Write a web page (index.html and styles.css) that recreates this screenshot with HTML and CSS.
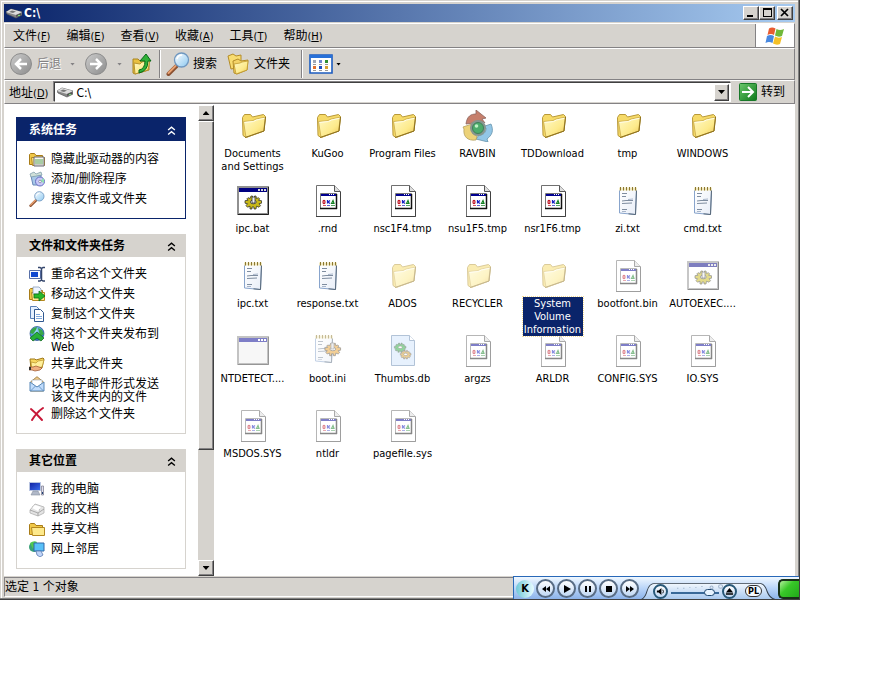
FILE: index.html
```html
<!DOCTYPE html>
<html lang="zh-CN">
<head>
<meta charset="utf-8">
<title>C:\</title>
<link rel="stylesheet" href="styles.css">
</head>
<body>
<svg class="defs" aria-hidden="true">
  <defs>
    <linearGradient id="g-folder" x1="0" y1="0" x2="1" y2="1"><stop offset="0" stop-color="#fffac8"/><stop offset=".6" stop-color="#fdea8c"/><stop offset="1" stop-color="#ecc450"/></linearGradient>
    <linearGradient id="g-lens" x1="0" y1="0" x2="1" y2="1"><stop offset="0" stop-color="#fff"/><stop offset="1" stop-color="#8cc8f0"/></linearGradient>
    <linearGradient id="g-green" x1="0" y1="0" x2="1" y2="1"><stop offset="0" stop-color="#6cc86c"/><stop offset="1" stop-color="#0c7818"/></linearGradient>
    <linearGradient id="g-gray" x1="0" y1="0" x2="1" y2="1"><stop offset="0" stop-color="#ccc"/><stop offset="1" stop-color="#8c8c8c"/></linearGradient>
    <linearGradient id="g-screen" x1="0" y1="0" x2="1" y2="1"><stop offset="0" stop-color="#1020a0"/><stop offset="1" stop-color="#3c70f0"/></linearGradient>
    <linearGradient id="g-page" x1="0" y1="0" x2="1" y2="1"><stop offset="0" stop-color="#fff"/><stop offset="1" stop-color="#e8eef8"/></linearGradient>
    <radialGradient id="g-globe" cx=".4" cy=".3" r=".8"><stop offset="0" stop-color="#a0e0ff"/><stop offset="1" stop-color="#1058b0"/></radialGradient>
    <linearGradient id="g-tray" x1="0" y1="0" x2="0" y2="1"><stop offset="0" stop-color="#f2f8fe"/><stop offset="1" stop-color="#a8c8ee"/></linearGradient>
  </defs>
  <symbol id="folder" viewBox="0 0 32 32">
    <path d="M5.500 7.500 7.500 4.500h6l2 2.500 11-2.500 2 2-1.500 14.500-18 6.500-3-2z" fill="#f6da68" stroke="#b89838"/>
    <path d="M6.500 11.500 16 10.500l3-1.500 9.500-2L26.500 21 9 27.500z" fill="url(#g-folder)" stroke="#c8a848" stroke-width=".8"/>
    <path d="M7.500 12.500 16.500 11.500l3-1.500 8-1.700" fill="none" stroke="#fffce8"/>
    <path d="M8 27.500 27 21l1.500-14" fill="none" stroke="#8c7020"/>
  </symbol>
  <symbol id="gear" viewBox="0 0 20 16">
    <path d="M8 1h1.500v2h2V1H13l.5 2.500 2-.8 1.200 1.200-1.200 1.400 3 .4v2.500l-2.500.5 1.500 2-1.500 1.500-2.500-1-.5 2.800h-2v-2h-2v2h-2L7 11.200l-2.500 1L3 10.700l1.500-2L2 8.200V5.700l3-.4-1.200-1.400L5 2.700l2 .8z" fill="currentColor" stroke="#222" stroke-width=".7"/>
    <ellipse cx="10.300" cy="7" rx="3" ry="1.800" fill="#fff" stroke="#222" stroke-width=".7"/>
  </symbol>
  <symbol id="bat" viewBox="0 0 32 32">
    <path d="M1 2h30v27H1z" fill="#fff" stroke="#909090" stroke-width="2"/>
    <path d="M1 29.500h30.500V2" fill="none" stroke="#202020"/>
    <path d="M2 3h28v4H2z" fill="#000080"/>
    <path d="M21 4h2v2h-2zM24 4h2v2h-2zM27 4h2v2h-2z" fill="#d8d8d8"/>
    <g color="#c8b818"><use href="#gear" x="6" y="10" width="20" height="16"/></g>
    <path d="M15 12h3v6h-3z" fill="#eee" stroke="#333" stroke-width=".8"/>
  </symbol>
  <symbol id="com" viewBox="0 0 32 32">
    <path d="M1 2h30v27H1z" fill="#f0f0f0" stroke="#888" stroke-width="2"/>
    <path d="M1 29.500h30.500V2" fill="none" stroke="#303030"/>
    <path d="M2 3h28v4H2z" fill="#000090"/>
    <path d="M21 4h2v2h-2zM24 4h2v2h-2zM27 4h2v2h-2z" fill="#fff"/>
  </symbol>
  <symbol id="page" viewBox="0 0 32 32">
    <path d="M4.500.5h18l6 6v25h-24z" fill="#fff" stroke="#707070"/>
    <path d="M28.500 7v24.500H4" fill="none" stroke="#404040"/>
    <path d="M22.500.5v6h6" fill="#ddd" stroke="#555"/>
    <path d="M8.500 8.500h16v15h-16z" fill="#fff" stroke="#777"/>
    <path d="M24.500 9v15M8 23.500h17" fill="none" stroke="#111" stroke-width="1.500"/>
    <path d="M9 9h15v2H9z" fill="#000090"/><path d="M17 9h1v1h-1zM19 9h1v1h-1zM21 9h1v1h-1z" fill="#fff"/>
    <ellipse cx="12" cy="17" rx="1" ry="1.600" fill="none" stroke="#c01020" stroke-width="1.200"/>
    <path d="M15.500 15v3.500M18 15.500 16 17l2 1.500" fill="none" stroke="#1820c0" stroke-width="1.200"/>
    <path d="m19.500 18.500 1.500-3 1 3z" fill="none" stroke="#108020" stroke-width="1.200"/>
    <path d="M11 20.500h3" stroke="#c01020" stroke-width=".7"/><path d="M15 20.500h3" stroke="#1820c0" stroke-width=".7"/><path d="M19 20.500h4" stroke="#108020" stroke-width=".7"/>
  </symbol>
  <symbol id="txt" viewBox="0 0 32 32">
    <path d="M7.500 4.500h17l-1 25-16-1.500z" fill="url(#g-page)" stroke="#88a4cc"/>
    <path d="m24.500 5-1 24.500-7-.7" fill="none" stroke="#586878"/>
    <path d="M7 2.500h18v3H7z" fill="#f0e8c0"/>
    <path d="M8.500 2v3.500M11.500 2v3.500M14.500 2v3.500M17.500 2v3.500M20.500 2v3.500M23.500 2v3.500" stroke="#8c7830"/>
    <path d="M10 8.500h5M10 11.500h4M10 16l4-.5h7M10 18.500l10-.5M10 24.500h5" stroke="#708094" fill="none" stroke-width=".9"/>
    <path d="M16 14.500l5-.5M10 26.500h4" stroke="#94a4bc" stroke-width=".8"/>
  </symbol>
  <symbol id="ini" viewBox="0 0 32 32">
    <use href="#txt" x="-4" y="-2" width="32" height="32"/>
    <g color="#e8a030"><use href="#gear" x="11" y="7" width="19" height="16"/></g>
    <path d="M19 8h3v6h-3z" fill="#ddd" stroke="#666" stroke-width=".7"/>
  </symbol>
  <symbol id="thumbs" viewBox="0 0 32 32">
    <path d="M4.500.5h18l5 5v25h-23z" fill="#d0e4fc" stroke="#6888b0"/><path d="M22.500.5v5h5" fill="#fff" stroke="#6888b0"/>
    <g color="#28b040"><use href="#gear" x="6" y="7" width="14" height="12"/></g>
    <g color="#d8a030"><use href="#gear" x="12" y="14" width="13" height="12"/></g>
  </symbol>
  <symbol id="rav" viewBox="0 0 32 32">
    <path d="M4 14C5 6 9 4 14 4V0l10 8-4 1 3 4c-4-3-8-3-11 0z" fill="#b86048" stroke="#704038" stroke-width=".8"/>
    <path d="M29 14c3 7 1 11-4 15l1 3-12-3 3-4c5 0 7-3 7-7l-4-1z" fill="#78b8e0" stroke="#407898" stroke-width=".8"/>
    <path d="M14 30C6 31 1 27 2 19l-1-2 9-3 1 10 4 2z" fill="#e8c858" stroke="#a08838" stroke-width=".8"/>
    <circle cx="16" cy="18" r="8" fill="#687c74"/>
    <circle cx="16" cy="18" r="5.500" fill="#209848" stroke="#106030"/><circle cx="14.500" cy="16" r="1.800" fill="#b0f0b8"/>
  </symbol>
  <symbol id="drive" viewBox="0 0 16 16">
    <path d="m0 7 5-3 11 3v3l-6 3L1 9z" fill="#888" stroke="#555" stroke-width=".7"/>
    <path d="m0 7 5-3 11 3-6 3z" fill="#ddd"/><path d="m3 7 3-1.500 4 1L7 8z" fill="#777"/><path d="m10 10 5-2v2l-5 2z" fill="#555"/><path d="M12 10h2v1h-2z" fill="#7d7"/>
  </symbol>
  <symbol id="search" viewBox="0 0 24 24">
    <path d="m2.500 22 8-8" stroke="#8a5030" stroke-width="4" stroke-linecap="round"/><path d="m2.500 21 7-7" stroke="#e8a070" stroke-width="2" stroke-linecap="round"/>
    <circle cx="15.500" cy="8" r="7" fill="url(#g-lens)" stroke="#7098c0" stroke-width="1.300"/><path d="M11 7q1-4 5-4" stroke="#fff" stroke-width="1.500" fill="none"/>
  </symbol>
  <symbol id="mfolder" viewBox="0 0 16 16">
    <path d="M.5 13.500v-10l1-1h4l1.500 2h6.500v9z" fill="#f0c848" stroke="#a87c18"/>
    <path d="M2.500 6.500h13v8h-12z" fill="#fde98c" stroke="#b48820"/>
  </symbol>
  <symbol id="hide" viewBox="0 0 16 16"><use href="#mfolder"/><path d="M5 6h10v9H5z" fill="#f8f8f0" stroke="#667"/><path d="M7 8v5M9 8v5M11 8v5M13 8v5" stroke="#58a058"/><path d="M6 14h8" stroke="#999"/></symbol>
  <symbol id="addrem" viewBox="0 0 16 16"><path d="m2 5 10-1v10H4z" fill="#a8c8e8" stroke="#6888b8"/><path d="m1 3 4-2 2 2 5-2 1 3-11 2z" fill="#d0e0d8" stroke="#7898a8" stroke-width=".7"/><circle cx="11" cy="10.500" r="4.500" fill="#c8c8f8" stroke="#6870c0"/><path d="m11 10 4-3v5z" fill="#90e0b0"/><circle cx="11" cy="10.500" r="1.300" fill="#fff" stroke="#668" stroke-width=".6"/></symbol>
  <symbol id="rename" viewBox="0 0 16 16"><path d="M.5 4.500h11v8H.5z" fill="#f8faff" stroke="#5870a8"/><path d="M2 6h7v5H2z" fill="#1048d0"/><path d="M9 1.500h2l1.500 1 1.500-1h2M9 15h2l1.500-1 1.500 1h2M12.500 2v12" stroke="#34466c" fill="none" stroke-width="1.500"/></symbol>
  <symbol id="move" viewBox="0 0 16 16"><use href="#mfolder"/><path d="M4 1h6l2 2v5H4z" fill="#eef4ff" stroke="#7890b0" stroke-width=".7"/><path d="M5 8h5V5l6 5-6 5v-3H5z" fill="#28b828" stroke="#087018" stroke-width=".8"/></symbol>
  <symbol id="copy" viewBox="0 0 16 16"><path d="M1.500.5h6l3 3v9h-9z" fill="#e4f0ff" stroke="#5880b8"/><path d="M5.500 3.500h6l3 3v9h-9z" fill="#fff" stroke="#305890"/><path d="M7 8.500h4M7 10.500h6M7 12.500h6" stroke="#80a8dc"/></symbol>
  <symbol id="globe" viewBox="0 0 16 16"><circle cx="8" cy="7.500" r="7" fill="url(#g-globe)" stroke="#285090" stroke-width=".7"/><path d="M2 4q3-3 6-3L7 4 4 8 1 7zM9 2l4 2 2 4-3 2-2-4z" fill="#38a848"/><path d="m8 6 7 6-3 3-4-3-4 3-3-3z" fill="#28b038" stroke="#086018" stroke-width=".7"/></symbol>
  <symbol id="share" viewBox="0 0 16 16"><path d="M1 3h5l1 1 7-2 1 1-2 9-11 1z" fill="#f8d860" stroke="#a07818"/><path d="m2 6 5 1 2-2 6-1-2 7-10 2z" fill="#fff09c" stroke="#b89028" stroke-width=".7"/><path d="M0 11h4l3-1 6 2-2 2-5 1-3-1H0z" fill="#f0b080" stroke="#985028" stroke-width=".7"/><path d="M0 11h2v3H0z" fill="#333"/></symbol>
  <symbol id="mail" viewBox="0 0 16 16"><path d="M1.500 6 8 .7 14.500 6v9h-13z" fill="#f0c888" stroke="#a88848"/><path d="M3 4h10v7H3z" fill="#fff" stroke="#9ab" stroke-width=".6"/><path d="m1 6 7 5 7-5v9H1z" fill="#c0dcfc" stroke="#5888b8"/><path d="m1.500 15 5-5M14.500 15l-5-5" stroke="#5888b8" stroke-width=".8"/></symbol>
  <symbol id="delete" viewBox="0 0 16 16"><path d="M2 3q5 4 11 11M14 2Q8 6 3 14" fill="none" stroke="#c81838" stroke-width="2" stroke-linecap="round"/></symbol>
  <symbol id="pc" viewBox="0 0 16 16"><path d="M.5 1.500h11v8H.5z" fill="url(#g-screen)" stroke="#b8c4e0"/><path d="M4 10h5l2 4H2z" fill="#b0b8c8" stroke="#8890a0" stroke-width=".6"/><path d="M12.500 5h2v9h-2z" fill="#dde" stroke="#778" stroke-width=".7"/><path d="M13 11h1v2h-1z" fill="#247"/></symbol>
  <symbol id="docs" viewBox="0 0 16 16"><path d="m1 9 5-6 9 3v6l-6 3-8-3z" fill="#e4e4e4" stroke="#b0b0b0" stroke-width=".8"/><path d="m1 9 8 3 6-4M3 6l8 3M9 12v3" fill="none" stroke="#989898" stroke-width=".8"/><path d="m3 7 3-3 6 2-3 4z" fill="#fff"/></symbol>
  <symbol id="net" viewBox="0 0 16 16"><circle cx="5" cy="6" r="5" fill="#38a078"/><path d="M1 2q4-3 7-1L4 8z" fill="#50c850"/><path d="M5 2h10v8H5z" fill="#58c0f8" stroke="#3068a8"/><path d="M7 10h5l2 4-3 2-3-2z" fill="#c0d4f8" stroke="#5878b0" stroke-width=".8"/></symbol>
  <symbol id="up2" viewBox="0 0 8 8"><path d="M1 3.500 4 1l3 2.500M1 7.500 4 5l3 2.500" fill="none" stroke="currentColor" stroke-width="1.200"/></symbol>
</svg>

<main class="window">
  <header class="titlebar">
    <svg class="i16"><use href="#drive"/></svg>
    <h1>C:\</h1>
    <div class="winbtns">
      <button aria-label="最小化"><svg viewBox="0 0 12 10"><path d="M2 7h6v2H2z"/></svg></button>
      <button aria-label="最大化"><svg viewBox="0 0 12 10"><path d="M2 0h9v9H2zM3 2v6h7V2z" fill-rule="evenodd"/></svg></button>
      <button class="close" aria-label="关闭"><svg viewBox="0 0 12 10"><path d="m2 1 7 7M9 1 2 8" stroke="#000" stroke-width="1.700"/></svg></button>
    </div>
  </header>

  <nav class="menubar">
    <button>文件<span>(<u>F</u>)</span></button>
    <button>编辑<span>(<u>E</u>)</span></button>
    <button>查看<span>(<u>V</u>)</span></button>
    <button>收藏<span>(<u>A</u>)</span></button>
    <button>工具<span>(<u>T</u>)</span></button>
    <button>帮助<span>(<u>H</u>)</span></button>
    <div class="flag">
      <svg viewBox="0 0 20 18"><path d="M4 1.500Q7-.5 10.500 1.500L9 8Q6 6 2.500 8z" fill="#e85c30"/><path d="M11.500 2q3.500 2 7.500 0l-2 7q-3.500 1.500-7-.5z" fill="#70b838"/><path d="M2 9q3.500-2 7 0L7.500 16Q4 14 .5 16z" fill="#4888e0"/><path d="M10 9.500q3 2 7 .5l-2 7q-3.500 1.500-7-.5z" fill="#f4c028"/></svg>
    </div>
  </nav>

  <div class="toolbar">
    <button class="nav back" disabled><svg class="i24" viewBox="0 0 24 24"><circle cx="12" cy="12" r="10.500" fill="url(#g-gray)" stroke="#8c8c8c"/><path d="M18 12H7m5-5-5 5 5 5" fill="none" stroke="#fff" stroke-width="2.500"/></svg>后退</button>
    <span class="drop off"></span>
    <button class="nav fwd" disabled aria-label="前进"><svg class="i24" viewBox="0 0 24 24"><circle cx="12" cy="12" r="10.500" fill="url(#g-gray)" stroke="#8c8c8c"/><path d="M6 12h11m-5-5 5 5-5 5" fill="none" stroke="#fff" stroke-width="2.500"/></svg></button>
    <span class="drop off"></span>
    <button class="updir" aria-label="向上"><svg class="i24" viewBox="0 0 24 24"><path d="M2 7h5l2 2 9-2v11L4 22l-2-1z" fill="#e8c040" stroke="#a88420"/><path d="m3 11 6 1 2-2 8-2-2 10-13 4z" fill="url(#g-folder)" stroke="#b89430"/><path d="M8 18q6-1 6-9H9l6-7 5 7h-3q0 10-9 12z" fill="#30b038" stroke="#086818"/></svg></button>
    <span class="sep"></span>
    <button class="find"><svg class="i24"><use href="#search"/></svg>搜索</button>
    <button class="folders"><svg class="i24" viewBox="0 0 24 24"><path d="M1 4l5-2 3 2 5-1v12L4 17z" fill="#f8dc70" stroke="#b48c28"/><path d="M6 9l5-2 3 2 7-1-1 10-10 4-3-1z" fill="#f4d468" stroke="#b48c28"/><path d="m7 12 6-1 2-1 6-1-1 9-11 4z" fill="url(#g-folder)" stroke="#c09a30" stroke-width=".8"/></svg>文件夹</button>
    <span class="sep"></span>
    <button class="views" aria-label="查看"><svg class="i24" viewBox="0 0 24 24"><path d="M1 3h22v18H1z" fill="#fff" stroke="#1c5cc0" stroke-width="1.600"/><path d="M1 3h22v3H1z" fill="#2870d8"/><path d="M4 8h3v3H4z" fill="#a0a8b8"/><path d="M10 8h3v3h-3z" fill="#7088d0"/><path d="M16 8h3v3h-3z" fill="#309030"/><path d="M4 14h3v3H4z" fill="#e07030"/><path d="M10 14h3v3h-3z" fill="#2050c0"/><path d="M16 14h3v3h-3z" fill="#d8a030"/><path d="M4 12.500h3m3 0h3m3 0h3M4 18.500h3m3 0h3m3 0h3" stroke="#999"/></svg></button>
    <span class="drop"></span>
  </div>

  <form class="address">
    <label for="path">地址<span>(<u>D</u>)</span></label>
    <div class="field">
      <svg class="i16"><use href="#drive"/></svg>
      <input id="path" type="text" value="C:\">
      <button type="button" class="bevel" aria-label="展开"><i class="tri down"></i></button>
    </div>
    <button type="button" class="go"><svg viewBox="0 0 18 18"><rect x=".5" y=".5" width="17" height="17" rx="1" fill="url(#g-green)" stroke="#187828"/><path d="M3 9h11M9 4l5 5-5 5" fill="none" stroke="#fff" stroke-width="2"/></svg>转到</button>
  </form>

  <div class="content">
    <aside class="side">
      <section class="card main">
        <h2>系统任务<svg><use href="#up2"/></svg></h2>
        <ul>
          <li><svg class="i16"><use href="#hide"/></svg><a href="#">隐藏此驱动器的内容</a></li>
          <li><svg class="i16"><use href="#addrem"/></svg><a href="#">添加/删除程序</a></li>
          <li><svg class="i16"><use href="#search"/></svg><a href="#">搜索文件或文件夹</a></li>
        </ul>
      </section>
      <section class="card">
        <h2>文件和文件夹任务<svg><use href="#up2"/></svg></h2>
        <ul>
          <li><svg class="i16"><use href="#rename"/></svg><a href="#">重命名这个文件夹</a></li>
          <li><svg class="i16"><use href="#move"/></svg><a href="#">移动这个文件夹</a></li>
          <li><svg class="i16"><use href="#copy"/></svg><a href="#">复制这个文件夹</a></li>
          <li><svg class="i16"><use href="#globe"/></svg><a href="#">将这个文件夹发布到 Web</a></li>
          <li><svg class="i16"><use href="#share"/></svg><a href="#">共享此文件夹</a></li>
          <li><svg class="i16"><use href="#mail"/></svg><a href="#">以电子邮件形式发送该文件夹内的文件</a></li>
          <li><svg class="i16"><use href="#delete"/></svg><a href="#">删除这个文件夹</a></li>
        </ul>
      </section>
      <section class="card">
        <h2>其它位置<svg><use href="#up2"/></svg></h2>
        <ul>
          <li><svg class="i16"><use href="#pc"/></svg><a href="#">我的电脑</a></li>
          <li><svg class="i16"><use href="#docs"/></svg><a href="#">我的文档</a></li>
          <li><svg class="i16"><use href="#mfolder"/></svg><a href="#">共享文档</a></li>
          <li><svg class="i16"><use href="#net"/></svg><a href="#">网上邻居</a></li>
        </ul>
      </section>
    </aside>
    <div class="scroll">
      <button class="bevel" aria-label="向上滚动"><i class="tri up"></i></button>
      <div class="track"><div class="thumb bevel"></div></div>
      <button class="bevel" aria-label="向下滚动"><i class="tri down"></i></button>
    </div>
    <ul class="files">
      <li><svg><use href="#folder"/></svg><a href="#">Documents and Settings</a></li>
      <li><svg><use href="#folder"/></svg><a href="#">KuGoo</a></li>
      <li><svg><use href="#folder"/></svg><a href="#">Program Files</a></li>
      <li><svg class="soft"><use href="#rav"/></svg><a href="#">RAVBIN</a></li>
      <li><svg><use href="#folder"/></svg><a href="#">TDDownload</a></li>
      <li><svg><use href="#folder"/></svg><a href="#">tmp</a></li>
      <li><svg><use href="#folder"/></svg><a href="#">WINDOWS</a></li>
      <li><svg><use href="#bat"/></svg><a href="#">ipc.bat</a></li>
      <li><svg><use href="#page"/></svg><a href="#">.rnd</a></li>
      <li><svg><use href="#page"/></svg><a href="#">nsc1F4.tmp</a></li>
      <li><svg><use href="#page"/></svg><a href="#">nsu1F5.tmp</a></li>
      <li><svg><use href="#page"/></svg><a href="#">nsr1F6.tmp</a></li>
      <li><svg><use href="#txt"/></svg><a href="#">zi.txt</a></li>
      <li><svg><use href="#txt"/></svg><a href="#">cmd.txt</a></li>
      <li><svg><use href="#txt"/></svg><a href="#">ipc.txt</a></li>
      <li><svg><use href="#txt"/></svg><a href="#">response.txt</a></li>
      <li class="hid"><svg><use href="#folder"/></svg><a href="#">ADOS</a></li>
      <li class="hid"><svg><use href="#folder"/></svg><a href="#">RECYCLER</a></li>
      <li class="hid sel"><svg><use href="#folder"/></svg><a href="#">System Volume Information</a></li>
      <li class="hid"><svg><use href="#page"/></svg><a href="#">bootfont.bin</a></li>
      <li class="hid"><svg><use href="#bat"/></svg><a href="#">AUTOEXEC....</a></li>
      <li class="hid"><svg><use href="#com"/></svg><a href="#">NTDETECT....</a></li>
      <li class="hid"><svg><use href="#ini"/></svg><a href="#">boot.ini</a></li>
      <li class="hid"><svg><use href="#thumbs"/></svg><a href="#">Thumbs.db</a></li>
      <li class="hid"><svg><use href="#page"/></svg><a href="#">argzs</a></li>
      <li class="hid"><svg><use href="#page"/></svg><a href="#">ARLDR</a></li>
      <li class="hid"><svg><use href="#page"/></svg><a href="#">CONFIG.SYS</a></li>
      <li class="hid"><svg><use href="#page"/></svg><a href="#">IO.SYS</a></li>
      <li class="hid"><svg><use href="#page"/></svg><a href="#">MSDOS.SYS</a></li>
      <li class="hid"><svg><use href="#page"/></svg><a href="#">ntldr</a></li>
      <li class="hid"><svg><use href="#page"/></svg><a href="#">pagefile.sys</a></li>
    </ul>
  </div>

  <footer class="status">选定 1 个对象</footer>

  <div class="player">
    <button class="logo">K</button>
    <button class="round" aria-label="上一首"><svg viewBox="0 0 10 10"><path d="M5 2v6L1 5zM9 2v6L5 5z"/></svg></button>
    <button class="round" aria-label="播放"><svg viewBox="0 0 10 10"><path d="m2 1 7 4-7 4z"/></svg></button>
    <button class="round" aria-label="暂停"><svg viewBox="0 0 10 10"><path d="M2 2h2v6H2zM6 2h2v6H6z"/></svg></button>
    <button class="round" aria-label="停止"><svg viewBox="0 0 10 10"><path d="M2 2h6v6H2z"/></svg></button>
    <button class="round" aria-label="下一首"><svg viewBox="0 0 10 10"><path d="m1 2 4 3-4 3zM5 2l4 3-4 3z"/></svg></button>
    <div class="tray">
      <svg class="traybg" viewBox="0 0 134 20" preserveAspectRatio="none"><path d="M0 19.500Q4 18 6 10 8 1.500 14 1.500H118Q123 2 125 10 128 19 134 19.500z" fill="url(#g-tray)" stroke="#34404c"/><path d="M36 7h1m5 0h1m5-1h1m5 0h1m5-1h1" stroke="#90a8c0"/><circle cx="70" cy="6" r="1.500" fill="none" stroke="#a0b4cc"/><circle cx="79" cy="5" r="2" fill="none" stroke="#a0b4cc"/></svg>
      <button class="round small" aria-label="静音"><svg viewBox="0 0 10 10"><path d="M1 4h2l3-3v8L3 6H1z"/><path d="M7.500 3q1.500 2 0 4" fill="none" stroke="#000"/></svg></button>
      <input type="range" min="0" max="100" value="88" aria-label="音量">
      <button class="round small" aria-label="弹出"><svg viewBox="0 0 10 10"><path d="m5 1 4 5H1zM1 7h8v1.500H1z"/></svg></button>
      <button class="pl">PL</button>
    </div>
    <div class="lcd"></div>
  </div>
</main>
</body>
</html>
```
FILE: styles.css
```css
* { box-sizing: border-box; }
body {
  margin: 0;
  min-height: 100vh;
  padding: 0 84px 77px 0;
  display: flex;
  background: #fff;
  color: #000;
  font: 11px/13px "DejaVu Sans Condensed", "Noto Sans CJK SC", sans-serif;
}
.defs { position: absolute; width: 0; height: 0; }
button, input { font: inherit; color: inherit; margin: 0; padding: 0; border: 0; background: none; }
button { display: flex; align-items: center; flex: none; }
ul { list-style: none; margin: 0; padding: 0; }
a { color: inherit; text-decoration: none; }
h1, h2 { margin: 0; font-size: 12px; }
svg { display: block; flex: none; }
.i16 { width: 16px; height: 16px; }
.i24 { width: 24px; height: 24px; }

.window {
  position: relative;
  flex: 1;
  min-width: 0;
  display: flex;
  flex-direction: column;
  padding: 4px 4px 2px;
  background: #d6d3ce;
  border-right: 1px solid #404040;
  border-bottom: 1px solid #404040;
  box-shadow: inset -1px -1px #808080, inset 1px 1px #d6d3ce, inset 2px 2px #fff;
  overflow: hidden;
}

.titlebar {
  display: flex;
  align-items: center;
  gap: 2px;
  height: 18px;
  padding: 0 2px;
  background: linear-gradient(90deg, #0a246a, #a6caf0);
  color: #fff;
}
.titlebar h1 { flex: 1; line-height: 18px; }
.winbtns { display: flex; }
.winbtns button {
  width: 16px;
  height: 14px;
  justify-content: center;
}
.winbtns svg { width: 12px; height: 10px; }
.winbtns .close { margin-left: 2px; }
.winbtns button, .bevel {
  background: #d6d3ce;
  border: 1px solid;
  border-color: #fff #404040 #404040 #fff;
  box-shadow: inset -1px -1px #848284;
}

.menubar, .toolbar, .address {
  display: flex;
  align-items: center;
  border: 1px solid #848284;
  border-top-color: #fff;
  border-left-color: #fff;
  font-size: 12px;
}
.menubar button, .address label { padding-top: 2px; }
.menubar span, .address label span { font-size: 11px; }
.menubar { height: 25px; margin-top: 1px; padding-left: 8px; gap: 16px; }
.flag {
  display: flex;
  align-items: center;
  justify-content: center;
  width: 39px;
  height: 23px;
  margin-left: auto;
  background: #fff;
  border-left: 1px solid #848284;
}
.flag svg { width: 20px; height: 18px; }

.toolbar { height: 32px; padding-left: 4px; }
.nav { gap: 4px; }
.nav:disabled { color: #848284; text-shadow: 1px 1px #fff; }
.drop {
  width: 5px;
  height: 3px;
  margin: 0 9px;
  background: #000;
  clip-path: polygon(0 0, 100% 0, 50% 100%);
}
.drop.off { background: #848284; }
.views + .drop { margin: 0 3px; }
.sep { width: 2px; height: 28px; background: #848284; border-right: 1px solid #fff; }
.updir { margin-right: 4px; }
.find, .folders { gap: 3px; }
.find { margin-left: 5px; }
.folders { margin: 0 11px 0 10px; }
.views { margin-left: 6px; }

.address { height: 24px; padding-left: 4px; gap: 6px; }
.field {
  flex: 1;
  display: flex;
  align-items: center;
  height: 20px;
  background: #fff;
  border: 1px solid #fff;
  border-color: #404040 #fff #fff #404040;
  box-shadow: -1px -1px #848284;
  padding: 1px 1px 1px 2px;
  gap: 3px;
}
.field input { flex: 1; min-width: 0; padding-top: 2px; outline: 0; font-size: 12px; }
.field .bevel { width: 15px; height: 17px; justify-content: center; }
.go { gap: 4px; padding: 0 9px 0 2px; }
.go svg { width: 18px; height: 18px; }

.tri { width: 7px; height: 4px; background: #000; }
.tri.down { clip-path: polygon(0 0, 100% 0, 50% 100%); }
.tri.up { clip-path: polygon(50% 0, 100% 100%, 0 100%); }

.content {
  flex: 1;
  display: flex;
  min-height: 0;
  padding-top: 1px;
  background: #fff;
}
.side {
  width: 194px;
  padding: 12px 12px 4px;
  display: flex;
  flex-direction: column;
  gap: 15px;
}
.card { width: 170px; border: 1px solid #d6d3ce; border-top: 0; }
.card h2 {
  display: flex;
  justify-content: space-between;
  align-items: center;
  height: 23px;
  margin: 0 -1px;
  padding: 2px 10px 0 13px;
  background: #d6d3ce;
}
.card h2 svg { width: 9px; height: 9px; }
.card ul { display: flex; flex-direction: column; gap: 4px; padding: 9px 14px 11px 12px; font-size: 12px; }
.card li { display: flex; gap: 6px; align-items: flex-start; min-height: 16px; }
.card li a { width: 110px; padding-top: 2px; margin-bottom: -2px; }
.card.main { border-color: #0a246a; }
.card.main h2 { height: 24px; background: #0a246a; color: #fff; }
.card.main ul { padding-top: 10px; }

.scroll { width: 16px; display: flex; flex-direction: column; background: #d6d3ce; }
.scroll button { height: 16px; width: 16px; justify-content: center; }
.track { flex: 1; }
.thumb { height: 75%; }

.files {
  flex: 1;
  display: grid;
  grid-template-columns: repeat(auto-fill, 75px);
  grid-auto-rows: 75px;
  align-content: start;
  padding: 5px 0 0 1px;
}
.files li { display: flex; flex-direction: column; align-items: center; gap: 5px; }
.files svg { width: 32px; height: 32px; }
.files a { text-align: center; max-width: 75px; white-space: pre-wrap; }
.files .hid svg { opacity: .5; }
.files .soft { opacity: .8; }
.files .sel { position: relative; z-index: 1; }
.files .sel a { max-width: 60px; background: #0a246a; color: #fff; outline: 1px dotted #f5db95; outline-offset: 0; }

.status {
  height: 20px;
  margin-top: 1px;
  border: 1px solid #848284;
  border-bottom-color: #fff;
  font-size: 12px;
  line-height: 19px;
}

.player {
  position: absolute;
  right: -1px;
  bottom: -1px;
  width: 287px;
  height: 24px;
  display: flex;
  align-items: center;
  gap: 2px;
  padding-left: 2px;
  border: 1px solid #2868b8;
  border-right: 0;
  border-bottom: 0;
  background: linear-gradient(#f0f8ff, #b8d4f8 50%, #88b0e8);
}
.player button { justify-content: center; }
.logo { width: 18px; height: 18px; border-radius: 9px; background: linear-gradient(90deg, #70c8d8, #e8fcff); font-weight: bold; }
.player .round { width: 19px; height: 19px; border: 2px solid #586c84; border-radius: 50%; background: linear-gradient(#fff, #c0d8f4); }
.round svg { width: 10px; height: 10px; }
.player .small { width: 15px; height: 15px; border-color: #285878; }
.player .small svg { width: 9px; height: 9px; }
.tray {
  position: relative;
  align-self: flex-end;
  flex: 1;
  min-width: 0;
  display: flex;
  align-items: center;
  gap: 3px;
  height: 18px;
  padding-left: 12px;
}
.traybg { position: absolute; inset: 0; width: 100%; height: 18px; }
.tray button, .tray input { position: relative; }
.tray input { flex: 1; width: 0; min-width: 0; height: 14px; padding-top: 4px; appearance: none; }
.tray input::-webkit-slider-runnable-track { height: 2px; background: #386898; }
.tray input::-webkit-slider-thumb {
  appearance: none;
  width: 11px;
  height: 7px;
  margin-top: -3px;
  border: 1px solid #204870;
  border-radius: 4px;
  background: #e8f4ff;
}
.player .pl { width: 17px; height: 12px; margin: 0 14px 0 5px; border: 1px solid #333; border-radius: 6px; background: #f4faff; font-size: 9px; font-weight: bold; }
.lcd {
  flex: none;
  width: 22px;
  height: 20px;
  border: 2px solid #183018;
  border-right: 0;
  border-radius: 5px 0 0 5px;
  background: linear-gradient(135deg, #b0f098, #38c828 40%, #20a818);
}
```
